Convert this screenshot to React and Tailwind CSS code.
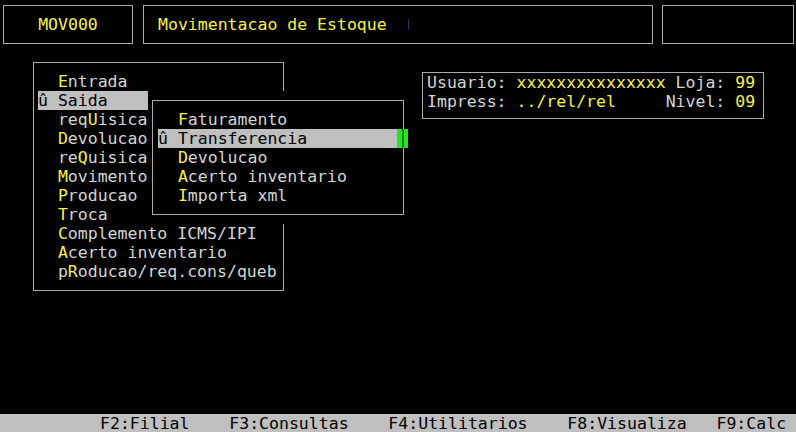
const YEL = "text-[#f6f04a]";

function Item({ text, hot, selected }) {
  if (selected) {
    return (
      <div className="whitespace-pre w-[110px] bg-[#bfbfbf] text-black">
        {"û " + text}
      </div>
    );
  }
  return (
    <div className="whitespace-pre">
      {"  "}
      {text.slice(0, hot)}
      <span className={YEL}>{text[hot]}</span>
      {text.slice(hot + 1)}
    </div>
  );
}

const menu = [
  ["Entrada", 0],
  ["Saida", 0, true],
  ["reqUisica", 3],
  ["Devolucao", 0],
  ["reQuisica", 2],
  ["Movimento", 0],
  ["Producao", 0],
  ["Troca", 0],
  ["Complemento ICMS/IPI", 0],
  ["Acerto inventario", 0],
  ["pRoducao/req.cons/queb", 1],
];

const sub = [
  ["Faturamento", 0],
  ["Transferencia", 0, true],
  ["Devolucao", 0],
  ["Acerto inventario", 0],
  ["Importa xml", 0],
];

export default function App() {
  return (
    <div className="h-[432px] w-[796px] bg-black overflow-hidden flex flex-col font-['DejaVu_Sans_Mono',monospace] text-[16.53px] leading-[19px] text-[#d3d7cf]">
      <header className="flex pt-[5px]">
        <div className={"ml-[3px] w-[130px] h-[39px] border border-[#aaaaaa] flex items-center justify-center " + YEL}>
          MOV000
        </div>
        <div className={"ml-[10px] w-[510px] h-[39px] border border-[#aaaaaa] flex items-center pl-[14px] " + YEL}>
          <span>Movimentacao de Estoque</span>
          <span className="ml-[21px] inline-block w-px h-[11px] bg-[#1c3a5c]" />
        </div>
        <div className="ml-[9px] w-[132px] h-[39px] border border-[#aaaaaa]" />
      </header>

      <main className="flex items-start">
        <div className="relative ml-[33px] mt-[18px] w-[251px] h-[229px] border border-[#aaaaaa] pt-[9px] pl-[4px]">
          {menu.map(([t, h, s]) => (
            <Item key={t} text={t} hot={h} selected={s} />
          ))}
          <div className="absolute left-[114px] top-[28px] w-[260px] h-[133px] bg-black pl-[4px] pt-[9px]">
            <div className="w-[252px] h-[115px] border border-[#aaaaaa] pt-[9px] pl-[5px]">
              {sub.map(([t, h, s]) =>
                s ? (
                  <div key={t} className="relative whitespace-pre w-[239px] bg-[#bfbfbf] text-black">
                    {"û " + t}
                    <span className="absolute left-[239px] top-0 w-[11px] h-[19px] bg-[#1fe61f]">
                      <span className="absolute left-[5px] top-0 w-[2px] h-full bg-[#2f7a2f]" />
                    </span>
                  </div>
                ) : (
                  <Item key={t} text={t} hot={h} />
                )
              )}
            </div>
          </div>
        </div>

        <div className="ml-[138px] mt-[28px] w-[342px] h-[47px] border border-[#aaaaaa] pl-[4px]">
          <div className="whitespace-pre">
            {"Usuario: "}
            <span className={YEL}>xxxxxxxxxxxxxxx</span>
            {" Loja: "}
            <span className={YEL}>99</span>
          </div>
          <div className="whitespace-pre">
            {"Impress: "}
            <span className={YEL}>../rel/rel</span>
            {"     Nivel: "}
            <span className={YEL}>09</span>
          </div>
        </div>
      </main>

      <footer className="mt-auto h-[18px] shrink-0 bg-[#bfbfbf] text-black whitespace-pre pl-[100px]">
        {"F2:Filial    F3:Consultas    F4:Utilitarios    F8:Visualiza   F9:Calc"}
      </footer>
    </div>
  );
}
